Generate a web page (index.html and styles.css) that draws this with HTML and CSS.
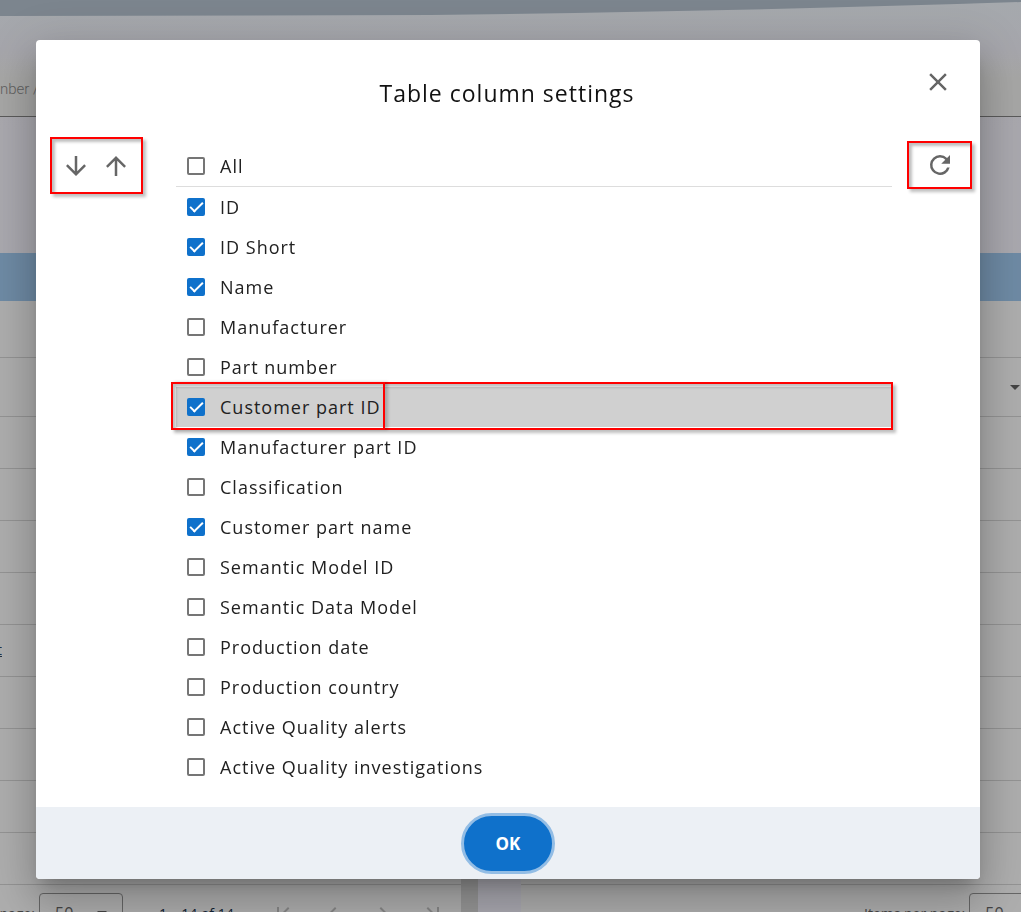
FILE: index.html
```html
<!DOCTYPE html>
<html lang="en">
<head>
<meta charset="utf-8">
<title>Table column settings</title>
<link rel="stylesheet" href="styles.css">
</head>
<body>
<div class="page" aria-hidden="true">
  <svg class="banner" viewBox="0 0 1021 18" preserveAspectRatio="none"><path d="M0 0H1021V2Q760 11 430 15L0 16Z" fill="#7c858e"/></svg>
  <div class="search"><span>nber /</span></div>
  <div class="panels">
    <section class="panel panel-left">
      <div class="thead"></div>
      <div class="row row-sort"></div>
      <div class="row row-filter"></div>
      <div class="row"></div><div class="row"></div><div class="row"></div><div class="row"></div>
      <div class="row"><a class="cut-link" href="#" tabindex="-1">t</a></div>
      <div class="row"></div><div class="row"></div><div class="row"></div><div class="row"></div>
      <div class="pager">
        <span class="pager-label">page:</span>
        <span class="pager-select">50 <svg width="10" height="5" viewBox="0 0 10 5"><path d="M0 0H10L5 5Z"/></svg></span>
        <span class="pager-range">1 – 14 of 14</span>
        <span class="pager-nav">
          <svg viewBox="0 0 24 24"><path d="M18.4 16.6 13.8 12l4.6-4.6L17 6l-6 6 6 6zM6 6h2v12H6z"/></svg>
          <svg viewBox="0 0 24 24"><path d="M15.4 7.4 14 6l-6 6 6 6 1.4-1.4L10.8 12z"/></svg>
          <svg viewBox="0 0 24 24"><path d="M10 6 8.6 7.4l4.6 4.6-4.6 4.6L10 18l6-6z"/></svg>
          <svg viewBox="0 0 24 24"><path d="m5.6 7.4 4.6 4.6-4.6 4.6L7 18l6-6-6-6zM16 6h2v12h-2z"/></svg>
        </span>
      </div>
    </section>
    <section class="panel panel-right">
      <div class="thead"></div>
      <div class="row row-sort"></div>
      <div class="row row-filter"><svg width="10" height="5" viewBox="0 0 10 5"><path d="M0 0H10L5 5Z"/></svg></div>
      <div class="row"></div><div class="row"></div><div class="row"></div><div class="row"></div><div class="row"></div>
      <div class="row"></div><div class="row"></div><div class="row"></div><div class="row"></div>
      <div class="pager pager-end">
        <span class="pager-label">Items per page:</span>
        <span class="pager-select">50</span>
      </div>
    </section>
  </div>
</div>

<div class="overlay">
  <form class="dialog" role="dialog" aria-labelledby="title">
    <header class="dialog-head">
      <h1 id="title">Table column settings</h1>
      <button class="icon-btn close" type="button" aria-label="Close"><svg viewBox="0 0 24 24"><path d="M19 6.4 17.6 5 12 10.6 6.4 5 5 6.4l5.6 5.6L5 17.6 6.4 19l5.6-5.6 5.6 5.6 1.4-1.4-5.6-5.6z"/></svg></button>
    </header>
    <div class="dialog-body">
      <div class="marked tools-move">
        <button class="icon-btn" type="button" aria-label="Move down"><svg viewBox="0 0 24 24"><path d="m20 12-1.4-1.4-5.6 5.6V4h-2v12.2l-5.6-5.6L4 12l8 8z"/></svg></button>
        <button class="icon-btn" type="button" aria-label="Move up"><svg viewBox="0 0 24 24"><path d="m4 12 1.4 1.4L11 7.8V20h2V7.8l5.6 5.6L20 12l-8-8z"/></svg></button>
      </div>
      <div class="columns">
        <label class="item all"><input type="checkbox">All</label>
        <label class="item"><input type="checkbox" checked>ID</label>
        <label class="item"><input type="checkbox" checked>ID Short</label>
        <label class="item"><input type="checkbox" checked>Name</label>
        <label class="item"><input type="checkbox">Manufacturer</label>
        <label class="item"><input type="checkbox">Part number</label>
        <label class="item selected"><input type="checkbox" checked>Customer part ID</label>
        <label class="item"><input type="checkbox" checked>Manufacturer part ID</label>
        <label class="item"><input type="checkbox">Classification</label>
        <label class="item"><input type="checkbox" checked>Customer part name</label>
        <label class="item"><input type="checkbox">Semantic Model ID</label>
        <label class="item"><input type="checkbox">Semantic Data Model</label>
        <label class="item"><input type="checkbox">Production date</label>
        <label class="item"><input type="checkbox">Production country</label>
        <label class="item"><input type="checkbox">Active Quality alerts</label>
        <label class="item"><input type="checkbox">Active Quality investigations</label>
      </div>
      <div class="marked tools-reset">
        <button class="icon-btn" type="button" aria-label="Reset"><svg viewBox="0 0 24 24"><path d="M17.65 6.35A7.96 7.96 0 0 0 12 4a8 8 0 1 0 7.73 10h-2.08A6 6 0 1 1 12 6c1.66 0 3.14.69 4.22 1.78L13 11h7V4z"/></svg></button>
      </div>
    </div>
    <footer class="dialog-foot"><button class="ok" type="button">OK</button></footer>
  </form>
</div>
</body>
</html>
```
FILE: styles.css
```css
*, ::before, ::after { box-sizing: border-box; }

body {
  margin: 0;
  font-family: "Open Sans", "Noto Sans", sans-serif;
  color: #212121;
}

/* dimmed page behind the dialog */
.page {
  display: flex;
  flex-direction: column;
  height: 100vh;
  overflow: hidden;
  background: linear-gradient(#a5a9ad 0, #a6a6ac 50px, #a9a8ae 130px, #a9a8b0 100%);
}
.banner { display: block; width: 100%; height: 18px; flex: none; }
.search {
  flex: none;
  height: 99px;
  padding-top: 61px;
  border-bottom: 1px solid #5a5a5a;
  background: linear-gradient(transparent 30px, #a6a6a5 60px);
  font-family: Roboto, sans-serif;
  font-weight: 300;
  font-size: 15px;
  line-height: 20px;
  color: #606060;
}
.panels {
  display: flex;
  flex: 1;
  gap: 43px;
  padding-top: 136px;
}
.panel { min-width: 0; background: #adadad; }
.panel-left { flex: 0 0 478px; border-right: 17px solid #969696; }
.panel-right { flex: 1; }
.thead { height: 48px; background: #6e8aa4; }
.row {
  height: 52px;
  border-bottom: 1px solid #939393;
  overflow: hidden;
}
.row-sort { height: 57px; }
.row-filter {
  display: flex;
  justify-content: flex-end;
  align-items: center;
  height: 59px;
  padding-right: 1px;
  fill: #444;
}
.cut-link {
  display: flex;
  justify-content: flex-end;
  width: 2px;
  overflow: hidden;
  font-size: 14px;
  line-height: 50px;
  color: #234;
}
.pager {
  display: flex;
  align-items: center;
  gap: 4px;
  height: 56px;
  font-size: 14px;
  color: #444;
  white-space: nowrap;
}
.panel-left .pager-label {
  display: flex;
  flex: none;
  justify-content: flex-end;
  width: 35px;
}
.pager-select {
  display: flex;
  flex: none;
  align-items: center;
  justify-content: space-between;
  width: 84px;
  height: 40px;
  padding: 0 15px;
  border: 1px solid #666;
  border-radius: 4px;
  font-size: 16px;
  fill: #444;
}
.pager-range { width: 72px; margin-left: 32px; color: #123; }
.pager-nav { display: flex; gap: 26px; margin-left: 36px; }
.pager-nav svg { width: 24px; height: 24px; fill: #858585; }
.pager-end { padding-left: 343px; }

/* dialog */
.overlay {
  position: fixed;
  inset: 0;
  padding: 40px 41px 33px 36px;
}
.dialog {
  display: flex;
  flex-direction: column;
  border-radius: 4px;
  overflow: hidden;
  background: #fff;
  box-shadow:
    0 11px 15px -7px rgba(0, 0, 0, .2),
    0 24px 38px 3px rgba(0, 0, 0, .14),
    0 9px 46px 8px rgba(0, 0, 0, .12);
}
.dialog-head {
  display: grid;
  grid-template-columns: 48px 1fr 48px;
  padding: 22px 18px 0 16px;
  height: 97px;
}
.dialog-head h1 {
  grid-column: 2;
  margin: 11px 0 0;
  font-size: 23px;
  font-weight: 500;
  line-height: 40px;
  letter-spacing: 1px;
  text-align: center;
  color: #111;
}
.icon-btn {
  display: flex;
  align-items: center;
  justify-content: center;
  width: 40px;
  height: 40px;
  padding: 0;
  border: 0;
  background: none;
}
.icon-btn svg { width: 30px; height: 30px; fill: #666; }
.close { justify-self: center; }

.dialog-body {
  display: grid;
  grid-template-columns: 93px 1fr 65px;
  align-items: start;
  padding: 0 8px 20px 14px;
}
.marked {
  display: flex;
  align-items: center;
  justify-content: center;
  border: 2px solid #f00;
  box-shadow: 3px 3px 3px rgba(0, 0, 0, .25), inset 3px 3px 3px rgba(0, 0, 0, .25);
}
.tools-move { height: 57px; padding-right: 2px; }
.tools-reset { height: 48px; margin-top: 4px; }
.columns { margin: 9px 15px 0 33px; }

.item {
  display: flex;
  align-items: center;
  gap: 15px;
  height: 40px;
  padding-left: 11px;
  font-size: 18px;
  line-height: 24px;
  letter-spacing: 1px;
}
.item.all { height: 41px; border-bottom: 1px solid #ddd; }
.item input {
  flex: none;
  display: grid;
  appearance: none;
  width: 18px;
  height: 18px;
  margin: 0;
  border: 2px solid #757575;
  border-radius: 2px;
}
.item input:checked { border-color: #0f71cb; background: #0f71cb; }
.item input:checked::after {
  content: "";
  place-self: center;
  width: 13px;
  height: 7px;
  margin-bottom: 4px;
  border: solid #fff;
  border-width: 0 0 2px 2px;
  rotate: -45deg;
}
.item.selected { position: relative; background: #d0d0d0; }

/* callout frames over the selected row */
.item.selected::before,
.item.selected::after {
  content: "";
  position: absolute;
  top: -5px;
  bottom: -3px;
  left: -5px;
  border: 2px solid #f00;
  box-shadow: 3px 3px 3px rgba(0, 0, 0, .25), inset 3px 3px 3px rgba(0, 0, 0, .25);
}
.item.selected::before { right: -1px; }
.item.selected::after { width: 214px; box-shadow: 3px 0 3px rgba(0, 0, 0, .2); }

.dialog-foot {
  display: flex;
  align-items: center;
  justify-content: center;
  height: 72px;
  background: #ecf0f5;
}
.ok {
  width: 94px;
  height: 61px;
  border: 3px solid #93bde5;
  border-radius: 31px;
  background: #0f71cb;
  font: 700 17px "Open Sans", sans-serif;
  color: #fff;
}
```
